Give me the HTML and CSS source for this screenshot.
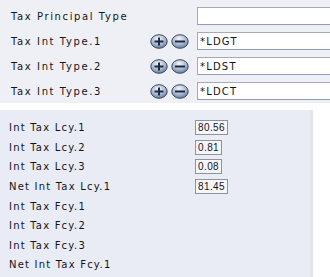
FILE: index.html
```html
<!DOCTYPE html>
<html lang="en">
<head>
  <meta charset="UTF-8">
  <title>Tax Interest</title>
  <link rel="stylesheet" href="styles.css">
</head>
<body>
  <div class="top">
    <div class="row">
      <span class="label">Tax Principal Type</span>
      <span class="btns"></span>
      <input type="text" class="field" value=""/>
    </div>
    <div class="row">
      <span class="label">Tax Int Type.1</span>
      <span class="btns">
        <svg class="icon" viewBox="0 0 18 15"><use href="#plus"/></svg>
        <svg class="icon" viewBox="0 0 18 15"><use href="#minus"/></svg>
      </span>
      <input type="text" class="field" value="*LDGT"/>
    </div>
    <div class="row">
      <span class="label">Tax Int Type.2</span>
      <span class="btns">
        <svg class="icon" viewBox="0 0 18 15"><use href="#plus"/></svg>
        <svg class="icon" viewBox="0 0 18 15"><use href="#minus"/></svg>
      </span>
      <input type="text" class="field" value="*LDST"/>
    </div>
    <div class="row">
      <span class="label">Tax Int Type.3</span>
      <span class="btns">
        <svg class="icon" viewBox="0 0 18 15"><use href="#plus"/></svg>
        <svg class="icon" viewBox="0 0 18 15"><use href="#minus"/></svg>
      </span>
      <input type="text" class="field" value="*LDCT"/>
    </div>
  </div>

  <div class="bottom">
    <div class="line"><span class="label">Int Tax Lcy.1</span><span class="val">80.56</span></div>
    <div class="line"><span class="label">Int Tax Lcy.2</span><span class="val">0.81</span></div>
    <div class="line"><span class="label">Int Tax Lcy.3</span><span class="val">0.08</span></div>
    <div class="line"><span class="label">Net Int Tax Lcy.1</span><span class="val">81.45</span></div>
    <div class="line"><span class="label">Int Tax Fcy.1</span></div>
    <div class="line"><span class="label">Int Tax Fcy.2</span></div>
    <div class="line"><span class="label">Int Tax Fcy.3</span></div>
    <div class="line"><span class="label">Net Int Tax Fcy.1</span></div>
  </div>

  <svg class="defs" width="0" height="0">
    <defs>
      <radialGradient id="ball" cx="0.45" cy="0.3" r="0.75">
        <stop offset="0" stop-color="#f4f7fb"/>
        <stop offset="0.55" stop-color="#a9b9cf"/>
        <stop offset="1" stop-color="#5a7090"/>
      </radialGradient>
      <g id="plus">
        <ellipse cx="9" cy="7.5" rx="8.2" ry="6.8" fill="url(#ball)" stroke="#3b4a63" stroke-width="1"/>
        <path d="M4.5 7.5h9M9 3.5v8" stroke="#1d2a44" stroke-width="2"/>
      </g>
      <g id="minus">
        <ellipse cx="9" cy="7.5" rx="8.2" ry="6.8" fill="url(#ball)" stroke="#3b4a63" stroke-width="1"/>
        <path d="M4 7.5h10" stroke="#1d2a44" stroke-width="2"/>
      </g>
    </defs>
  </svg>
</body>
</html>
```

FILE: styles.css
```css
body {
  margin: 0;
  background: #ffffff;
  font-family: "DejaVu Sans", sans-serif;
  font-size: 10px;
  color: #141418;
  overflow: hidden;
}

.top {
  background: #eef0f6;
  padding-top: 7px;
  height: 96px;
}

.row {
  display: flex;
  align-items: center;
  height: 18px;
  margin-bottom: 7px;
}

.row > * {
  flex-shrink: 0;
}

.label {
  letter-spacing: 1.2px;
}

.row .label {
  width: 139px;
  padding-left: 11px;
  letter-spacing: 1.6px;
}

.btns {
  display: flex;
  gap: 3px;
  width: 47px;
}

.icon {
  width: 18px;
  height: 15px;
}

.field {
  box-sizing: border-box;
  width: 133px;
  height: 18px;
  margin: 0;
  padding: 0 2px;
  border: 1px solid #a3abba;
  border-right: none;
  border-bottom-color: #8e9cb5;
  background: #ffffff;
  font-family: "DejaVu Sans", sans-serif;
  font-size: 10px;
  letter-spacing: 1.2px;
  color: #141418;
}

.bottom {
  margin-top: 7px;
  width: 313px;
  height: 167px;
  padding-top: 8px;
  box-sizing: border-box;
  background: #e9ebf5;
  border-right: 3px solid #e1e4ec;
}

.line {
  display: flex;
  align-items: center;
  height: 19.6px;
}

.line .label {
  width: 186px;
  padding-left: 9px;
}

.val {
  box-sizing: border-box;
  height: 15px;
  padding: 0 2px;
  border: 1px solid #8d929c;
  background: #f4f6fa;
  font-family: "Liberation Sans", sans-serif;
  font-size: 10px;
  letter-spacing: 0.4px;
  line-height: 13px;
}

.defs {
  position: absolute;
}
```
